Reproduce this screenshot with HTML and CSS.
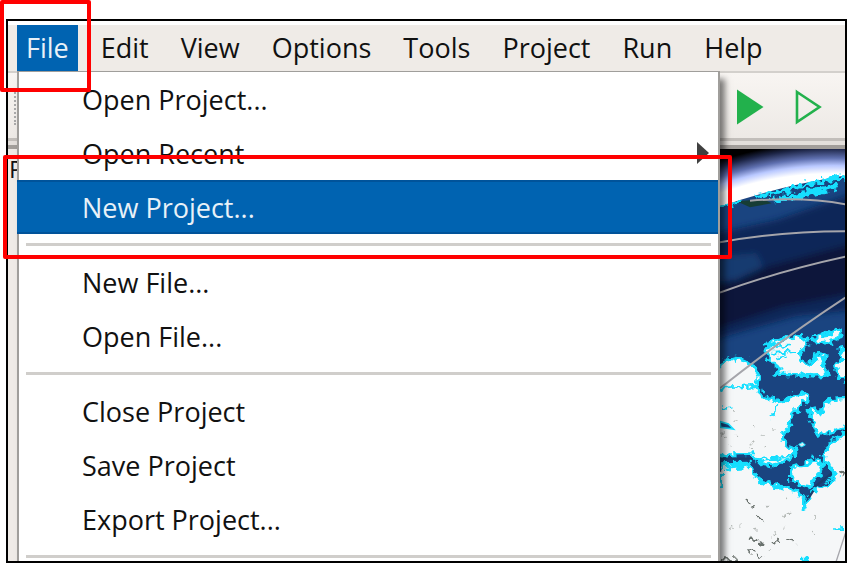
FILE: index.html
```html
<!DOCTYPE html>
<html lang="en">
<head>
  <meta charset="UTF-8" />
  <meta name="viewport" content="width=device-width, initial-scale=1.0" />
  <title>File menu</title>
  <link rel="stylesheet" href="styles.css">
</head>
<body>
  <div class="window">
    <nav class="menubar">
      <button class="menubar-item open" type="button">File</button>
      <button class="menubar-item" type="button">Edit</button>
      <button class="menubar-item" type="button">View</button>
      <button class="menubar-item" type="button">Options</button>
      <button class="menubar-item" type="button">Tools</button>
      <button class="menubar-item" type="button">Project</button>
      <button class="menubar-item" type="button">Run</button>
      <button class="menubar-item" type="button">Help</button>
    </nav>

    <div class="toolbar">
      <span class="grip"></span>
      <button class="tool" type="button" aria-label="Run">
        <svg width="28" height="36" viewBox="0 0 28 36"><path d="M0 0.5 L26.5 18 L0 35.5 Z" fill="#22b14c"/></svg>
      </button>
      <button class="tool" type="button" aria-label="Run step">
        <svg width="28" height="36" viewBox="0 0 28 36"><path d="M2 3 L24.5 18 L2 33 Z" fill="none" stroke="#22b14c" stroke-width="2.6"/></svg>
      </button>
    </div>

    <div class="workspace">
      <aside class="sidebar">P</aside>
      <svg class="map" viewBox="60 -513 375 1236" preserveAspectRatio="xMinYMin slice">
        <defs>
          <radialGradient id="sky" gradientUnits="userSpaceOnUse" cx="400" cy="560" r="1110">
            <stop offset="0.9" stop-color="#ffffff"/>
            <stop offset="0.922" stop-color="#b9c8ff"/>
            <stop offset="0.942" stop-color="#5f70b0"/>
            <stop offset="0.968" stop-color="#1c2445"/>
            <stop offset="0.985" stop-color="#000000"/>
          </radialGradient>
          <filter id="ragged" x="-10%" y="-10%" width="120%" height="120%">
            <feTurbulence type="fractalNoise" baseFrequency="0.07" numOctaves="1" seed="4"/>
            <feDisplacementMap in="SourceGraphic" scale="36" xChannelSelector="R" yChannelSelector="G"/>
          </filter>
          <filter id="soft" x="-20%" y="-20%" width="140%" height="140%">
            <feGaussianBlur stdDeviation="9"/>
          </filter>
          <clipPath id="globe">
            <path d="M60 -340 Q220 -398 440 -434 V730 H60 Z"/>
          </clipPath>
        </defs>

        <rect x="60" y="-513" width="380" height="1240" fill="#000"/>
        <rect x="60" y="-513" width="380" height="240" fill="url(#sky)"/>

        <!-- ocean -->
        <g clip-path="url(#globe)">
          <rect x="60" y="-450" width="380" height="1180" fill="#1a4480"/>
          <g filter="url(#soft)">
            <path d="M40 -258 L230 -300 L460 -380 V-30 L290 -12 L160 25 L40 60 Z" fill="#0f2858"/>
            <path d="M40 -100 L200 -160 L460 -230 V-80 L250 -40 L40 30 Z" fill="#08173a"/>
            <path d="M50 -190 L170 -200 L190 -160 L110 -120 L50 -115 Z" fill="#183a70"/>
          </g>
        </g>
        <path d="M110 -356 L190 -362 L215 -350 L150 -338 Z" fill="#173d35"/>

        <!-- northern coast -->
        <g filter="url(#ragged)" fill="none" stroke="#16dfff">
          <path d="M62 -338 L125 -356" stroke-width="9"/>
          <path d="M165 -368 L250 -386 L350 -414 L440 -430" stroke-width="13"/>
          <path d="M220 -358 L300 -374 L410 -402" stroke-width="17"/>
        </g>

        <!-- land -->
        <g filter="url(#ragged)" fill="#f5f7f8" stroke="#16dfff" stroke-width="10" stroke-linejoin="round">
          <path d="M40 145 L85 120 L110 112 L140 125 L165 140 L175 165 L172 195 L185 230 L220 235 L240 250 L285 225 L320 220 L325 238 L300 258 L275 285 L268 320 L245 350 L265 380 L288 388 L280 415 L250 422 L215 437 L180 430 L155 402 L40 408 Z"/>
          <path d="M40 432 L150 430 L160 460 L190 487 L245 500 L285 510 L308 530 L308 572 L330 530 L345 507 L390 495 L408 465 L385 430 L370 408 L395 365 L460 325 V760 H40 Z"/>
          <path d="M195 75 L250 55 L300 50 L325 60 L318 80 L298 95 L308 130 L340 128 L345 98 L375 105 L370 130 L385 165 L345 168 L300 165 L225 162 L240 148 L205 115 Z"/>
          <path d="M340 50 L385 42 L420 28 L425 45 L395 65 L355 70 Z"/>
          <path d="M460 75 L420 85 L425 120 L405 145 L415 168 L460 190 Z"/>
          <path d="M325 270 L345 264 L360 280 L385 240 L460 232 V310 L400 335 L355 345 L345 320 Z"/>
          <path d="M275 440 L310 435 L340 418 L370 430 L360 462 L340 480 L330 500 L300 497 L275 480 Z"/>
        </g>
        <g filter="url(#ragged)" fill="none" stroke="#16dfff" stroke-width="8">
          <path d="M60 205 L170 198 M235 240 L225 275 L205 295 M60 263 L88 265 M60 435 H150 M62 440 V510 M160 420 L240 412 L285 405 M205 78 L270 75 M215 100 L285 95 M230 115 L260 110 M315 520 L305 575 M400 629 H435 M300 717 H325 M75 445 L145 440 M285 485 L320 505 M375 420 L400 465 L380 485"/>
        </g>
        <path d="M60 305 L85 312 L100 327 L62 322 Z" fill="#1a4480" stroke="#16dfff" stroke-width="5"/>
        <path d="M60 416 H155 M60 422 V455 M345 500 L395 460 M325 535 L340 512" fill="none" stroke="#1b3d6c" stroke-width="7"/>
        <path d="M296 373 l12 -6 l8 8 l-12 6 Z" fill="#d4edf2" stroke="#16dfff" stroke-width="3"/>

        <!-- lakes and rocks -->
        <g filter="url(#ragged)" fill="none" stroke-linecap="round">
          <path d="M140 540 l12 16 M175 590 l12 8 M152 656 l18 2 M178 668 l14 6 M220 662 l14 4 M268 660 l14 6 M148 690 l12 4 M172 700 l10 8 M70 718 h36 M425 465 l10 -18" stroke="#6b726e" stroke-width="7"/>
          <path d="M260 535 h5 M255 583 l18 -5 M345 590 v8 M92 622 h4 M120 622 h2 M165 626 h4 M225 640 h3 M340 640 h3 M200 560 h2 M70 345 v3 M85 378 h2 M110 350 h2 M150 365 l8 3 M190 345 h3 M155 385 h3 M190 380 h5 M100 272 h2 M108 303 h3 M165 320 h2 M222 330 h3 M250 620 h2 M208 690 h4" stroke="#b5bab7" stroke-width="5"/>
        </g>

        <!-- graticule -->
        <g fill="none" stroke="#a5a5ab" stroke-width="6">
          <path d="M150 -358 Q320 -370 436 -347"/>
          <path d="M60 -233 Q240 -266 436 -266"/>
          <path d="M60 -82 Q230 -145 436 -190"/>
          <path d="M60 205 Q250 55 436 -67"/>
          <path d="M436 640 L408 726" stroke-width="4"/>
        </g>
      </svg>
    </div>

    <div class="menu">
      <button class="menu-item" type="button">Open Project...</button>
      <button class="menu-item" type="button">Open Recent
        <svg class="arrow" width="12" height="22" viewBox="0 0 12 22"><path d="M0 0 L12 11 L0 22 Z" fill="#404040"/></svg>
      </button>
      <button class="menu-item selected" type="button">New Project...</button>
      <hr class="separator">
      <button class="menu-item" type="button">New File...</button>
      <button class="menu-item" type="button">Open File...</button>
      <hr class="separator">
      <button class="menu-item" type="button">Close Project</button>
      <button class="menu-item" type="button">Save Project</button>
      <button class="menu-item" type="button">Export Project...</button>
      <hr class="separator">
    </div>
  </div>

  <div class="callout callout-file"></div>
  <div class="callout callout-new"></div>
</body>
</html>
```
FILE: styles.css
```css
* {
  box-sizing: border-box;
}

body {
  margin: 0;
  height: 100vh;
  padding: 19px 0 0 6px;
  position: relative;
  overflow: hidden;
  background: #fff;
  color: #111;
  font-family: "Open Sans", "Noto Sans", sans-serif;
  font-size: 27px;
}

button {
  border: 0;
  background: none;
  color: inherit;
  font: inherit;
}

.window {
  position: relative;
  display: flex;
  flex-direction: column;
  height: 100%;
  padding-top: 4px;
  border: 2px solid #000;
  overflow: hidden;
}

.menubar {
  display: flex;
  gap: 14px;
  padding-left: 9px;
  background: #efebe7;
  border-bottom: 2px solid #d3d0cc;
}

.menubar-item {
  height: 46px;
  padding: 0 9px;
  line-height: 46px;
}

.menubar-item.open {
  background: #0063b1;
  color: #e8f1f8;
}

.toolbar {
  display: flex;
  align-items: center;
  gap: 30px;
  height: 76px;
  padding: 0 22px 4px 6px;
  background: linear-gradient(#f8f5f2, #ece8e4);
  border-bottom: 4px solid #a29e9a;
  box-shadow: inset 0 -4px #e3dfdb, inset 0 -7px #c2beba;
}

.grip {
  height: 36px;
  margin-right: auto;
  border-left: 2px dotted #aaa;
}

.tool {
  display: flex;
  padding: 0;
}

.workspace {
  display: flex;
  flex: 1;
  min-height: 0;
}

.sidebar {
  flex: 1;
  padding: 6px 1px;
  background: #efebe7;
  font-size: 24px;
  line-height: 27px;
}

.map {
  width: 125px;
  height: 100%;
}

/* drop-down under File */
.menu {
  position: absolute;
  top: 50px;
  left: 9px;
  right: 125px;
  background: #fff;
  border: 2px solid #a09e9b;
  border-top-width: 1px;
  box-shadow: 5px 8px 6px rgba(0, 0, 0, 0.5);
}

.menu-item {
  display: flex;
  align-items: center;
  justify-content: space-between;
  width: 100%;
  height: 54px;
  padding: 0 9px 0 63px;
  text-align: left;
}

/* the highlight covers the menu's left border */
.menu-item.selected {
  width: calc(100% + 2px);
  margin-left: -2px;
  padding-left: 65px;
  background: #0063b1;
  border: solid #00539a;
  border-width: 2px 0;
  color: #e8f1f8;
}

.separator {
  height: 3px;
  margin: 9px 7px;
  border: 0;
  background: #d0cecb;
}

/* red highlight boxes */
.callout {
  position: absolute;
  border: 4px solid #f00;
  border-radius: 2px;
}

.callout-file {
  top: 0;
  left: 0;
  width: 91px;
  height: 92px;
}

.callout-new {
  top: 155px;
  left: 3px;
  right: 115px;
  height: 104px;
}
```
